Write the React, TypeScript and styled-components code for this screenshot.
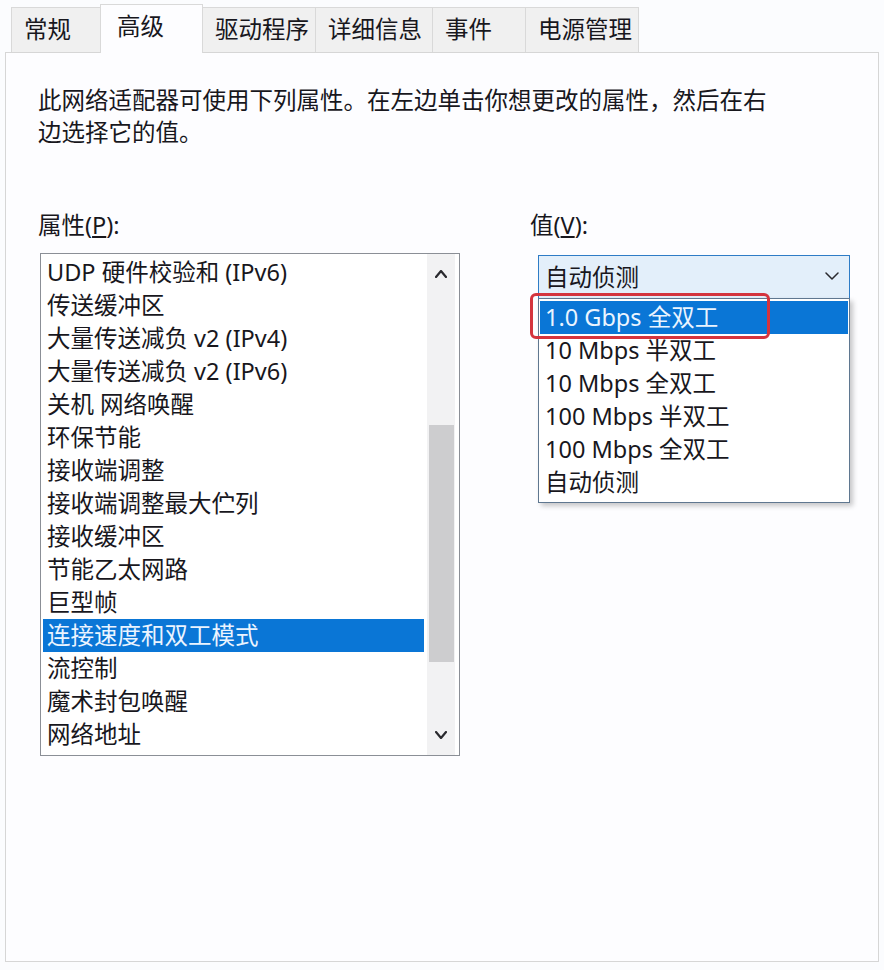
import React from "react";
import styled, { createGlobalStyle } from "styled-components";

const GlobalStyle = createGlobalStyle`
  html, body {
    margin: 0;
    padding: 0;
    background: #fbfcfe;
  }
  body {
    font-family: "Noto Sans", "Noto Sans CJK SC", sans-serif;
    color: #18171d;
    -webkit-font-smoothing: antialiased;
  }
`;

const FS = "23.5px";

const Window = styled.div`
  width: 884px;
  height: 970px;
  box-sizing: border-box;
  padding: 4px 5px 0 5px;
  display: flex;
  flex-direction: column;
  background: #fbfcfe;
`;

const TabStrip = styled.div`
  display: flex;
  align-items: flex-end;
  height: 48px;
  padding-left: 6px;
`;

const Tab = styled.div<{ $active?: boolean; $w: number }>`
  box-sizing: border-box;
  width: ${(p) => p.$w}px;
  height: ${(p) => (p.$active ? 49 : 45)}px;
  margin-bottom: ${(p) => (p.$active ? -1 : 0)}px;
  margin-right: -1px;
  position: relative;
  z-index: ${(p) => (p.$active ? 1 : 0)};
  padding-left: ${(p) => (p.$active ? 16 : 12)}px;
  background: ${(p) => (p.$active ? "#fdfdff" : "#f0f0f0")};
  border: 1px solid #d9d9d9;
  border-bottom: none;
  font-size: ${FS};
  line-height: 43px;
  white-space: nowrap;
`;

const Panel = styled.div`
  box-sizing: border-box;
  width: 874px;
  height: 910px;
  border: 1px solid #d6d6d6;
  background: #fdfdff;
  padding: 31px 0 0 32px;
  display: flex;
  flex-direction: column;
`;

const Description = styled.p`
  margin: 0;
  width: 740px;
  font-size: ${FS};
  line-height: 32px;
`;

const Columns = styled.div`
  display: flex;
  align-items: flex-start;
  margin-top: 61px;
`;

const Column = styled.div<{ $w: number; $ml?: number }>`
  display: flex;
  flex-direction: column;
  width: ${(p) => p.$w}px;
  margin-left: ${(p) => p.$ml ?? 0}px;
`;

const FieldLabel = styled.div`
  font-size: ${FS};
  line-height: 32px;
  & u {
    text-underline-offset: 2px;
  }
`;

const ListBox = styled.div`
  box-sizing: border-box;
  margin: 12px 0 0 2px;
  width: 420px;
  height: 503px;
  border: 1px solid #8b8f96;
  background: #ffffff;
  display: flex;
`;

const Items = styled.div`
  flex: 1;
  padding: 2px;
  display: flex;
  flex-direction: column;
  overflow: hidden;
`;

const Item = styled.div<{ $selected?: boolean }>`
  height: 33px;
  line-height: 33px;
  padding-left: 4px;
  font-size: ${FS};
  white-space: nowrap;
  background: ${(p) => (p.$selected ? "#0a76d6" : "transparent")};
  color: ${(p) => (p.$selected ? "#eaf4ff" : "inherit")};
`;

const ScrollBar = styled.div`
  width: 28px;
  margin: 0 4px 0 1px;
  background: #f2f2f3;
  display: flex;
  flex-direction: column;
`;

const ScrollButton = styled.div`
  height: 40px;
  display: flex;
  align-items: center;
  justify-content: center;
`;

const Track = styled.div`
  flex: 1;
  display: flex;
  flex-direction: column;
  align-items: center;
`;

const Thumb = styled.div`
  width: 25px;
  background: #cdcdcf;
`;

const ComboWrap = styled.div`
  position: relative;
  margin: 14px 0 0 8px;
  width: 312px;
`;

const Combo = styled.div`
  box-sizing: border-box;
  height: 44px;
  border: 1px solid #2e7cc6;
  background: #e3effa;
  display: flex;
  align-items: center;
  justify-content: space-between;
  padding: 0 10px 2px 6px;
  font-size: ${FS};
`;

const DropList = styled.div`
  position: absolute;
  left: 0;
  top: 43px;
  width: 312px;
  box-sizing: border-box;
  border: 1px solid #5f7790;
  background: #ffffff;
  padding: 2px 1px 3px;
  box-shadow: 3px 3px 5px rgba(0, 0, 0, 0.22);
  z-index: 2;
`;

const DropItem = styled.div<{ $selected?: boolean }>`
  height: 33px;
  line-height: 33px;
  padding-left: 5px;
  font-size: ${FS};
  white-space: nowrap;
  background: ${(p) => (p.$selected ? "#0a76d6" : "transparent")};
  color: ${(p) => (p.$selected ? "#eaf4ff" : "inherit")};
`;

const Highlight = styled.div`
  position: absolute;
  left: -8px;
  top: 38px;
  width: 240px;
  height: 46px;
  box-sizing: border-box;
  border: 3px solid #d4343e;
  border-radius: 6px;
  z-index: 3;
  pointer-events: none;
`;

const Chevron = ({ dir, w = 12, h = 7, stroke = 1.6 }: { dir: "up" | "down"; w?: number; h?: number; stroke?: number }) => (
  <svg width={w} height={h} viewBox={`0 0 ${w} ${h}`} fill="none">
    <polyline
      points={
        dir === "down"
          ? `1,1 ${w / 2},${h - 1} ${w - 1},1`
          : `1,${h - 1} ${w / 2},1 ${w - 1},${h - 1}`
      }
      stroke="#2a2a2e"
      strokeWidth={stroke}
      strokeLinecap="round"
      strokeLinejoin="round"
    />
  </svg>
);

const tabs = [
  { label: "常规", w: 90 },
  { label: "高级", w: 103, active: true },
  { label: "驱动程序", w: 114 },
  { label: "详细信息", w: 118 },
  { label: "事件", w: 94 },
  { label: "电源管理", w: 114 },
];

const properties = [
  "UDP 硬件校验和 (IPv6)",
  "传送缓冲区",
  "大量传送减负 v2 (IPv4)",
  "大量传送减负 v2 (IPv6)",
  "关机 网络唤醒",
  "环保节能",
  "接收端调整",
  "接收端调整最大伫列",
  "接收缓冲区",
  "节能乙太网路",
  "巨型帧",
  "连接速度和双工模式",
  "流控制",
  "魔术封包唤醒",
  "网络地址",
];

const values = [
  "1.0 Gbps 全双工",
  "10 Mbps 半双工",
  "10 Mbps 全双工",
  "100 Mbps 半双工",
  "100 Mbps 全双工",
  "自动侦测",
];

const scroll = { offset: 131, size: 237 };

export default function App() {
  return (
    <>
      <GlobalStyle />
      <Window>
        <TabStrip>
          {tabs.map((t) => (
            <Tab key={t.label} $w={t.w} $active={t.active}>
              {t.label}
            </Tab>
          ))}
        </TabStrip>
        <Panel>
          <Description>
            此网络适配器可使用下列属性。在左边单击你想更改的属性，然后在右边选择它的值。
          </Description>
          <Columns>
            <Column $w={422}>
              <FieldLabel>
                属性(<u>P</u>):
              </FieldLabel>
              <ListBox>
                <Items>
                  {properties.map((p) => (
                    <Item key={p} $selected={p === "连接速度和双工模式"}>
                      {p}
                    </Item>
                  ))}
                </Items>
                <ScrollBar>
                  <ScrollButton>
                    <Chevron dir="up" w={12} h={8} stroke={2.2} />
                  </ScrollButton>
                  <Track>
                    <Thumb style={{ marginTop: scroll.offset, height: scroll.size }} />
                  </Track>
                  <ScrollButton>
                    <Chevron dir="down" w={12} h={8} stroke={2.2} />
                  </ScrollButton>
                </ScrollBar>
              </ListBox>
            </Column>
            <Column $w={330} $ml={70}>
              <FieldLabel>
                值(<u>V</u>):
              </FieldLabel>
              <ComboWrap>
                <Combo>
                  <span>自动侦测</span>
                  <Chevron dir="down" w={14} h={8} stroke={1.5} />
                </Combo>
                <DropList>
                  {values.map((v, i) => (
                    <DropItem key={v} $selected={i === 0}>
                      {v}
                    </DropItem>
                  ))}
                </DropList>
                <Highlight />
              </ComboWrap>
            </Column>
          </Columns>
        </Panel>
      </Window>
    </>
  );
}
